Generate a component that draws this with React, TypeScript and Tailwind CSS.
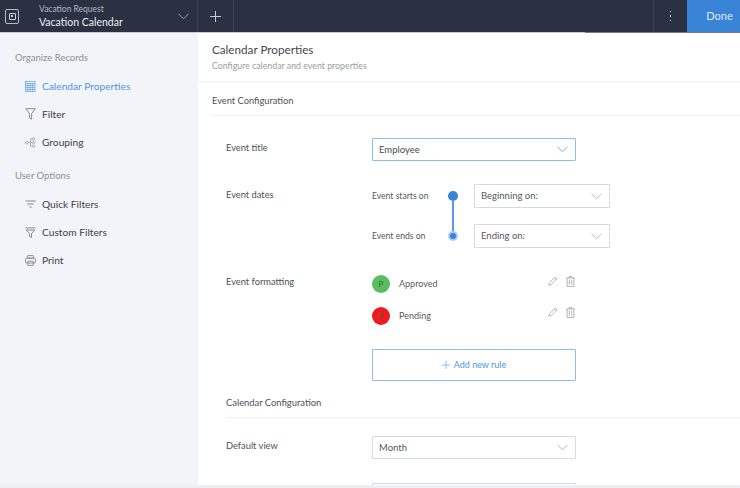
import React from "react";

const Chevron = ({ className = "" }: { className?: string }) => (
  <svg width="11" height="7" viewBox="0 0 11 7" fill="none" stroke="currentColor" strokeWidth="1" className={className}>
    <path d="M0.5 0.8 L5.5 5.8 L10.5 0.8" />
  </svg>
);

const CalIcon = () => (
  <svg width="11" height="11" viewBox="0 0 11 11" fill="none" stroke="#6aa8e6" strokeWidth="0.8">
    <rect x="0.5" y="0.5" width="9.5" height="10" />
    <path d="M0.5 2.5H10 M0.5 4.5H10 M0.5 6.5H10 M0.5 8.5H10 M2.8 2.5V10.5 M5.2 2.5V10.5 M7.6 2.5V10.5" />
  </svg>
);
const FunnelIcon = () => (
  <svg width="11" height="12" viewBox="0 0 11 12" fill="none" stroke="#7d8085" strokeWidth="0.9">
    <path d="M0.7 0.7H10.3L6.6 5.6V11.2L4.4 10V5.6Z" />
  </svg>
);
const GroupIcon = () => (
  <svg width="11" height="11" viewBox="0 0 11 11" fill="none" stroke="#a3a6ab" strokeWidth="0.9">
    <circle cx="2" cy="5.5" r="1.4" />
    <circle cx="8.6" cy="1.8" r="1.2" />
    <circle cx="8.6" cy="5.5" r="1.2" />
    <circle cx="8.6" cy="9.2" r="1.2" />
    <path d="M3.4 5.5H7.4 M5.6 5.5V1.8H7.4 M5.6 5.5V9.2H7.4" />
  </svg>
);
const QuickIcon = () => (
  <svg width="11" height="8" viewBox="0 0 11 8" fill="none" stroke="#7d8085" strokeWidth="0.9">
    <path d="M0.5 1H10.5 M2.3 4H8.7 M4.3 7H6.7" />
  </svg>
);
const CustomIcon = () => (
  <svg width="11" height="11" viewBox="0 0 11 11" fill="none" stroke="#7d8085" strokeWidth="0.9">
    <path d="M0.5 0.9H10.5 M1.2 3H9.8L6.5 6.6V10.4L4.5 9.4V6.6Z" />
  </svg>
);
const PrintIcon = () => (
  <svg width="11" height="11" viewBox="0 0 11 11" fill="none" stroke="#85888d" strokeWidth="0.9">
    <rect x="2.5" y="0.6" width="6" height="2.6" rx="0.5" />
    <rect x="0.6" y="3.2" width="9.8" height="4.8" rx="1" />
    <rect x="2.7" y="6.2" width="5.6" height="4.2" rx="0.4" />
  </svg>
);
const PencilIcon = () => (
  <svg width="10" height="10" viewBox="0 0 10 10" fill="none" stroke="#b0b1b3" strokeWidth="0.9">
    <path d="M0.8 9.2L1.4 6.8L7.2 1L9 2.8L3.2 8.6Z M6.2 2L8 3.8" />
  </svg>
);
const TrashIcon = () => (
  <svg width="9" height="11" viewBox="0 0 9 11" fill="none" stroke="#a8a9ab" strokeWidth="0.9">
    <path d="M0.2 2H8.8 M3 2V0.6H6V2 M1.1 2V10.4H7.9V2 M3.3 3.8V8.6 M5.7 3.8V8.6" />
  </svg>
);

const NavItem = ({ icon, label, active }: { icon: React.ReactNode; label: string; active?: boolean }) => (
  <div className="h-[28px] flex items-center pl-[24px]">
    <span className="w-[18px] flex items-center justify-start shrink-0 pl-[0.5px]">{icon}</span>
    <span className={`pt-[1px] text-[10.2px] ${active ? "text-[#4d96e2]" : "text-[#3f4145]"}`}>{label}</span>
  </div>
);

const Select = ({ label, blue, className = "", labelClass = "" }: { label: string; blue?: boolean; className?: string; labelClass?: string }) => (
  <div
    className={`flex items-center justify-between rounded-[1px] bg-white pl-[6px] pr-[7px] ${
      blue ? "border-[1.5px] border-[#8dbcee] text-[#4a4c50]" : "border border-[#d9dadd] text-[#55575b]"
    } ${className}`}
  >
    <span className={`text-[9.5px] ${labelClass}`}>{label}</span>
    <Chevron className={blue ? "text-[#76aee6]" : "text-[#b4b6ba]"} />
  </div>
);

const Label = ({ children, className = "" }: { children: React.ReactNode; className?: string }) => (
  <div className={`w-[146px] shrink-0 text-[9.3px] leading-[12px] text-[#4f5155] ${className}`}>{children}</div>
);

const RuleRow = ({ color, name, className = "", iconClass = "" }: { color: string; name: string; className?: string; iconClass?: string }) => (
  <div className={`relative w-[204px] h-[18px] flex items-center ${className}`}>
    <span className={`w-[18px] h-[18px] rounded-full flex items-center justify-center text-[8px] text-[#47624a] ${color}`}>P</span>
    <span className="ml-[9px] text-[9px] text-[#595b5f]">{name}</span>
    <span className={`absolute left-[176px] flex ${iconClass}`}><PencilIcon /></span>
    <span className={`absolute left-[194px] flex ${iconClass}`}><TrashIcon /></span>
  </div>
);

export default function App() {
  return (
    <div
      className="relative w-[740px] h-[488px] overflow-hidden bg-white flex flex-col"
      style={{ fontFamily: '"Lato", "Open Sans", sans-serif' }}
    >
      <header className="relative h-[33px] shrink-0 flex bg-[#2a3142] border-b border-[#c9cbd2] text-white">
        <div className="w-[198px] shrink-0 flex items-center pl-[5px] border-r border-[#3a4152]">
          <div className="w-[14px] h-[15px] rounded-[2px] border border-[#b6bac2] flex items-center justify-center">
            <div className="w-[7px] h-[7px] rounded-[1px] border border-[#d4d7dc] flex items-center justify-center">
              <div className="w-[2px] h-[2px] bg-[#d4d7dc]" />
            </div>
          </div>
          <div className="ml-[20px] flex-1 flex flex-col self-start pt-[4px]">
            <span className="text-[8.5px] leading-[11px] text-[#b3b7c0]">Vacation Request</span>
            <span className="text-[10.5px] leading-[14px] text-[#eceef1]">Vacation Calendar</span>
          </div>
          <Chevron className="mr-[8px] text-[#9ea3ad]" />
        </div>
        <div className="w-[36px] shrink-0 flex items-center justify-center border-r border-[#3a4152]">
          <svg width="11" height="11" viewBox="0 0 11 11" stroke="#c9ccd2" strokeWidth="1">
            <path d="M5.5 0V11 M0 5.5H11" />
          </svg>
        </div>
        <div className="flex-1" />
        <div className="w-[34px] shrink-0 flex flex-col items-center justify-center gap-[3px] border-l border-[#3a4152]">
          <span className="w-[1.5px] h-[1.5px] bg-[#c9ccd2]" />
          <span className="w-[1.5px] h-[1.5px] bg-[#c9ccd2]" />
          <span className="w-[1.5px] h-[1.5px] bg-[#c9ccd2]" />
        </div>
        <div className="w-[53px] shrink-0 flex items-center justify-center pl-[12px] bg-[#3a84d8] text-[11px] text-[#dde9f7]">Done</div>
        <div className="absolute left-[585px] right-0 bottom-[-1px] h-[1px] bg-[#777b88]" />
      </header>

      <div className="flex-1 flex min-h-0">
        <aside className="w-[198px] shrink-0 bg-[#f3f4f9]">
          <div className="pl-[15px] mt-[19px] text-[9.5px] leading-[12px] text-[#8e9094]">Organize Records</div>
          <div className="mt-[8px]">
            <NavItem icon={<CalIcon />} label="Calendar Properties" active />
            <NavItem icon={<FunnelIcon />} label="Filter" />
            <NavItem icon={<GroupIcon />} label="Grouping" />
          </div>
          <div className="pl-[15px] mt-[14px] text-[9.5px] leading-[12px] text-[#8e9094]">User Options</div>
          <div className="mt-[8px]">
            <NavItem icon={<QuickIcon />} label="Quick Filters" />
            <NavItem icon={<CustomIcon />} label="Custom Filters" />
            <NavItem icon={<PrintIcon />} label="Print" />
          </div>
        </aside>

        <main className="flex-1 min-w-0 overflow-hidden">
          <div className="h-[49px] border-b border-[#eeeff1] pl-[14px] pt-[9px]">
            <div className="text-[11.7px] leading-[14px] text-[#45474b]">Calendar Properties</div>
            <div className="mt-[4px] text-[8.8px] leading-[11px] text-[#9a9c9f]">Configure calendar and event properties</div>
          </div>
          <div className="ml-[14px] h-[34px] border-b border-[#eeeff1] pt-[13px] text-[9.3px] leading-[12px] text-[#4f5155]">
            Event Configuration
          </div>

          <div className="pl-[28px]">
            <div className="flex mt-[22px]">
              <Label className="pt-[4px]">Event title</Label>
              <Select label="Employee" blue labelClass="pt-[1px]" className="w-[204px] h-[23px]" />
            </div>

            <div className="flex mt-[23px]">
              <Label className="pt-[5px]">Event dates</Label>
              <div className="flex">
                <div className="w-[82px] flex flex-col relative">
                  <div className="h-[24px] flex items-center text-[8.6px] text-[#55575b]">Event starts on</div>
                  <div className="h-[24px] mt-[16px] flex items-center text-[8.6px] text-[#55575b]">Event ends on</div>
                  <div className="absolute left-[76px] top-[7px] w-[10px] h-[10px] rounded-full bg-[#3a84d8]" />
                  <div className="absolute left-[80px] top-[16px] w-[2px] h-[32px] bg-[#5a9ce2]" />
                  <div className="absolute left-[78px] top-[49px] w-[6px] h-[6px] rounded-full bg-[#3a84d8] ring-2 ring-[#a9cbef]" />
                </div>
                <div className="ml-[20px] flex flex-col gap-[16px]">
                  <Select label="Beginning on:" className="w-[136px] h-[24px]" />
                  <Select label="Ending on:" labelClass="pt-[1px]" className="w-[136px] h-[24px]" />
                </div>
              </div>
            </div>

            <div className="flex mt-[26px]">
              <Label className="pt-[2px]">Event formatting</Label>
              <div>
                <RuleRow color="bg-[#58bd5c]" name="Approved" className="mt-[1px]" iconClass="top-[1px]" />
                <RuleRow color="bg-[#ee1a1e]" name="Pending" className="mt-[14px]" iconClass="top-[0px]" />
                <div className="mt-[24px] w-[204px] h-[32px] rounded-[1px] border-[1.5px] border-[#8dbcee] flex items-center justify-center gap-[4px] text-[9px] text-[#4d96e2]">
                  <svg width="8" height="8" viewBox="0 0 8 8" stroke="#8dbcee" strokeWidth="1">
                    <path d="M4 0V8 M0 4H8" />
                  </svg>
                  <span>Add new rule</span>
                </div>
              </div>
            </div>
          </div>

          <div className="ml-[28px] h-[21px] mt-[16px] border-b border-[#eeeff1] text-[9.4px] leading-[12px] text-[#4f5155]">
            Calendar Configuration
          </div>

          <div className="pl-[28px]">
            <div className="flex mt-[18px]">
              <Label className="pt-[4px]">Default view</Label>
              <Select label="Month" labelClass="pt-[1px]" className="w-[204px] h-[23px]" />
            </div>
            <div className="flex mt-[24px]">
              <div className="w-[146px] shrink-0" />
              <div className="w-[204px] h-[23px] border border-[#d9dadd] bg-white" />
            </div>
          </div>
        </main>
      </div>
      <div className="absolute left-0 right-0 bottom-0 h-[3px] bg-[#eeeff1]" />
    </div>
  );
}
